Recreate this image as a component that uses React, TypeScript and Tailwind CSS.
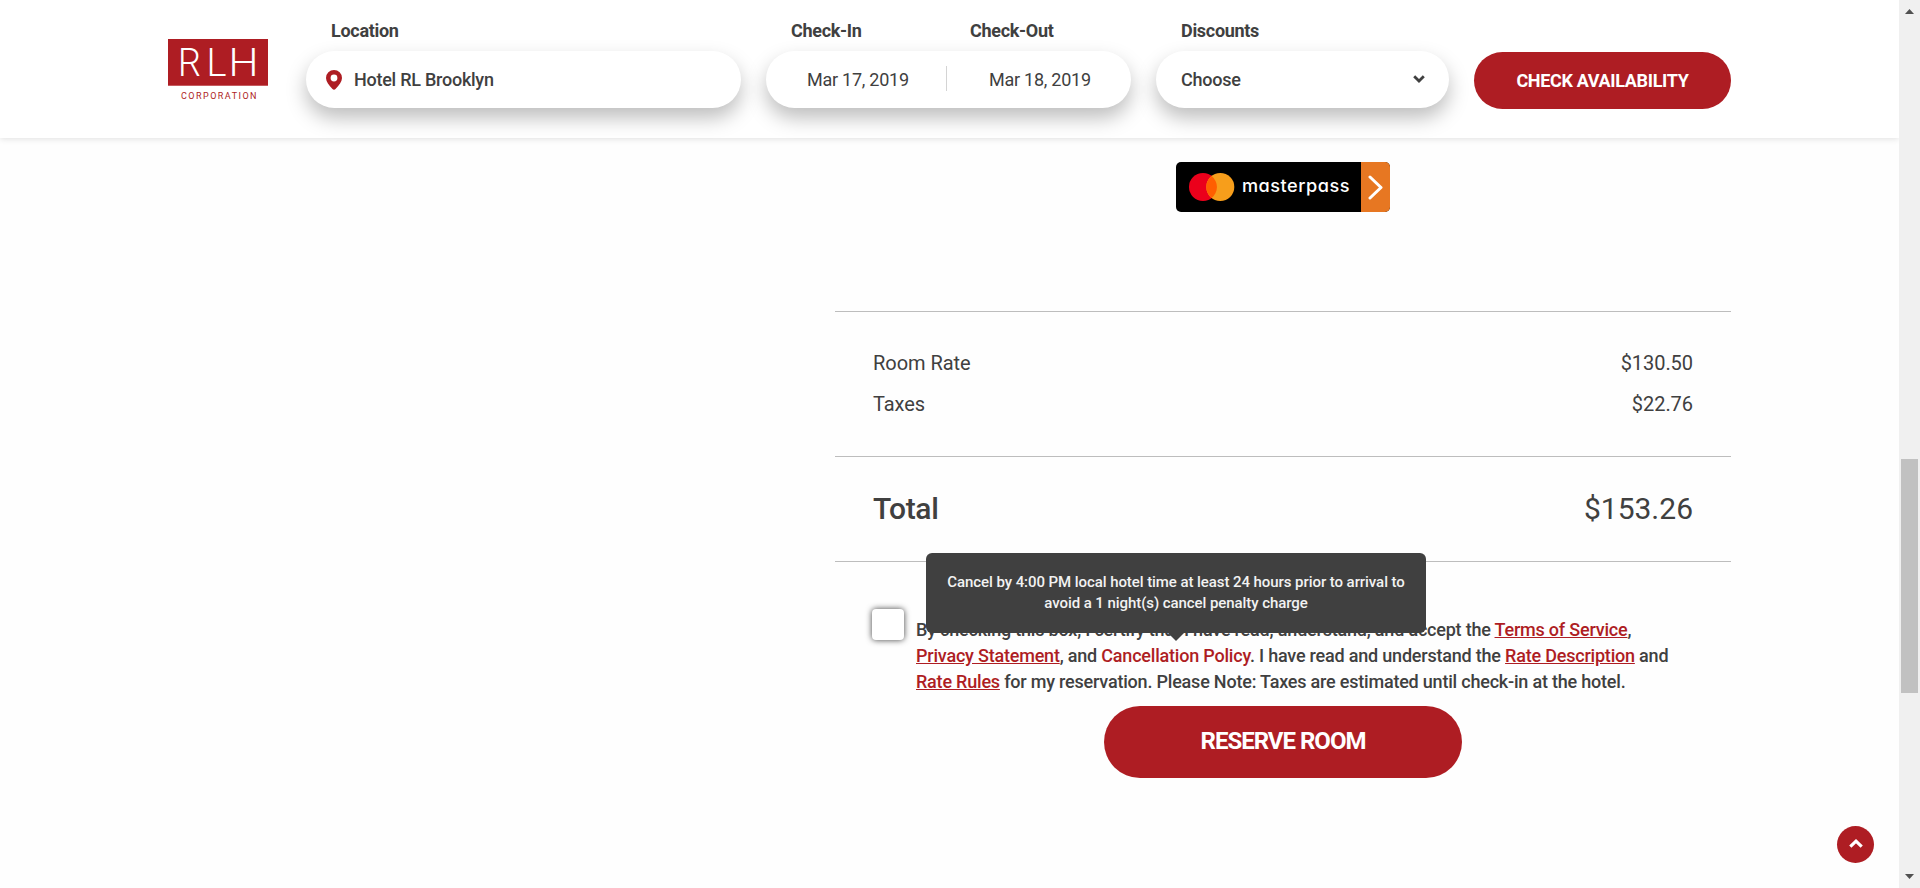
import React from "react";

const pill =
  "flex h-[57px] items-center rounded-full bg-white text-[18px] tracking-[-0.25px] shadow-[0_10px_20px_rgba(0,0,0,0.26)]";

function Logo() {
  return (
    <div className="mt-[39px] w-[100px] shrink-0">
      <svg width="100" height="62" viewBox="0 0 100 62" className="block">
        <rect width="100" height="46" fill="#ae1d23" />
        <rect y="46" width="100" height="1" fill="#c65a5e" />
        <g fill="#fff" fontFamily="Roboto, sans-serif" fontWeight="300" fontSize="38">
          <text x="10" y="37" textLength="23" lengthAdjust="spacingAndGlyphs">R</text>
          <text x="38.500" y="37" textLength="20" lengthAdjust="spacingAndGlyphs">L</text>
          <text x="60.500" y="37" textLength="30" lengthAdjust="spacingAndGlyphs">H</text>
        </g>
        <text
          x="13"
          y="60"
          fill="#ae1d23"
          fontFamily="Roboto, sans-serif"
          fontSize="9"
          fontWeight="400"
          textLength="75.500"
        >
          CORPORATION
        </text>
      </svg>
    </div>
  );
}

function Label({ children, className = "" }: { children: React.ReactNode; className?: string }) {
  return (
    <div className={`h-[28px] text-[18px] leading-[28px] font-bold tracking-[-0.3px] ${className}`}>{children}</div>
  );
}

function Header() {
  return (
    <header className="flex h-[138px] w-full shrink-0 bg-white pl-[168px] shadow-[0_1px_6px_rgba(0,0,0,0.12)]">
      <Logo />
      <div className="ml-[38px] w-[435px] pt-[17px]">
        <Label className="pl-[25px]">Location</Label>
        <div className={`${pill} mt-[6px] pl-[20px] font-medium`}>
          <svg width="16" height="20" viewBox="0 0 16 20" className="mr-[12px]">
            <path
              fillRule="evenodd"
              fill="#ae1d23"
              d="M8 0a8 8 0 0 1 8 8c0 3.600-3 7.300-6.500 11.100-.8.900-2.200.900-3 0C3 15.300 0 11.600 0 8a8 8 0 0 1 8-8Zm0 4.600a3.400 3.400 0 1 0 0 6.800 3.400 3.400 0 0 0 0-6.800Z"
            />
          </svg>
          <span>Hotel RL Brooklyn</span>
        </div>
      </div>
      <div className="ml-[25px] w-[365px] pt-[17px]">
        <div className="flex">
          <Label className="w-[178px] pl-[25px]">Check-In</Label>
          <Label className="pl-[26px]">Check-Out</Label>
        </div>
        <div className={`${pill} mt-[6px]`}>
          <span className="w-[180px] pl-[41px]">Mar 17, 2019</span>
          <span className="mb-[2px] h-[25px] w-px bg-[#d4d4d4]" />
          <span className="pl-[42px]">Mar 18, 2019</span>
        </div>
      </div>
      <div className="ml-[25px] w-[293px] pt-[17px]">
        <Label className="pl-[25px]">Discounts</Label>
        <div className={`${pill} mt-[6px] justify-between pr-[24px] pl-[25px] font-medium`}>
          <span>Choose</span>
          <svg width="12" height="8" viewBox="0 0 12 8" fill="none" stroke="#404040" strokeWidth="2.800" className="mb-px">
            <path d="M1.200 1.200 6 6 10.800 1.200" />
          </svg>
        </div>
      </div>
      <button className="mt-[52px] ml-[25px] h-[57px] w-[257px] rounded-full bg-[#ae1d23] text-[18px] font-bold tracking-[-0.33px] text-white">
        CHECK AVAILABILITY
      </button>
    </header>
  );
}

function Masterpass() {
  return (
    <div className="flex h-[50px] w-[214px] items-center overflow-hidden rounded-[5px] bg-black">
      <svg width="46" height="28" viewBox="0 0 46 28" className="ml-[13px] shrink-0">
        <circle cx="14" cy="14" r="14" fill="#eb001b" />
        <circle cx="31.300" cy="14" r="14" fill="#f79e1b" />
        <path d="M22.600 3a14 14 0 0 1 0 22 14 14 0 0 1 0-22Z" fill="#ff5f00" />
      </svg>
      <svg width="110" height="30" viewBox="0 0 110 30" className="ml-[7px] shrink-0">
        <text
          x="0"
          y="20"
          fill="#fff"
          fontFamily="Inter, sans-serif"
          fontSize="18"
          fontWeight="500"
          textLength="108"
          lengthAdjust="spacingAndGlyphs"
          className="tracking-[0.5px] [font-feature-settings:'cv11']"
        >
          masterpass
        </text>
      </svg>
      <div className="ml-auto flex h-full w-[29px] items-center justify-center bg-[#e77722]">
        <svg width="15" height="25" viewBox="0 0 15 25" fill="none" stroke="#fff" strokeWidth="3" strokeLinecap="round" strokeLinejoin="round">
          <path d="M2 2 13 12.500 2 23" />
        </svg>
      </div>
    </div>
  );
}

function Link({ children }: { children: React.ReactNode }) {
  return (
    <a href="#" className="text-[#ae1d23] underline">
      {children}
    </a>
  );
}

function Tooltip() {
  return (
    <div className="absolute top-[-9px] left-[91px] h-[80px] w-[500px] rounded-[6px] bg-[#404040] pt-[19px] text-center text-[15px] leading-[21px] font-medium tracking-[-0.07px] whitespace-nowrap text-[#f2f2f2]">
      Cancel by 4:00 PM local hotel time at least 24 hours prior to arrival to
      <br />
      avoid a 1 night(s) cancel penalty charge
      <svg width="16" height="8" viewBox="0 0 16 8" className="absolute top-[80px] left-[242px]">
        <path d="M0 0h16L8 8Z" fill="#404040" />
      </svg>
    </div>
  );
}

function Summary() {
  return (
    <section className="mt-[24px] ml-[835px] flex w-[896px] flex-col">
      <div className="flex justify-center">
        <Masterpass />
      </div>
      <div className="mt-[99px] border-y border-[#bdbdbd] px-[38px] py-[31px] text-[20px] leading-[41px] tracking-[-0.05px]">
        <div className="flex justify-between">
          <span>Room Rate</span>
          <span>$130.50</span>
        </div>
        <div className="flex justify-between">
          <span>Taxes</span>
          <span>$22.76</span>
        </div>
      </div>
      <div className="flex h-[105px] items-center justify-between border-b border-[#bdbdbd] px-[38px] pb-[2px] text-[30px]">
        <span className="font-medium tracking-[-0.3px]">Total</span>
        <span>$153.26</span>
      </div>
      <div className="relative flex pt-[55px] pl-[37px]">
        <span className="mt-[-8px] h-[31px] w-[32px] shrink-0 rounded-[4px] bg-white shadow-[0_0_6px_rgba(0,0,0,0.75)]" />
        <p className="ml-[12px] text-[18px] leading-[26px] font-medium tracking-[-0.206px] whitespace-nowrap">
          By checking this box, I certify that I have read, understand, and accept the <Link>Terms of Service</Link>,
          <br />
          <Link>Privacy Statement</Link>, and <span className="text-[#ae1d23]">Cancellation Policy</span>. I have read
          and understand the <Link>Rate Description</Link> and
          <br />
          <Link>Rate Rules</Link> for my reservation. Please Note: Taxes are estimated until check-in at the hotel.
        </p>
        <Tooltip />
      </div>
      <button className="mt-[11px] ml-[269px] h-[72px] w-[358px] rounded-full bg-[#ae1d23] pb-[2px] text-[24px] font-bold tracking-[-1px] text-white">
        RESERVE ROOM
      </button>
    </section>
  );
}

function Scrollbar() {
  return (
    <div className="flex w-[21px] shrink-0 flex-col items-center bg-[#f0f0f0]">
      <svg width="9" height="5" viewBox="0 0 9 5" className="mt-[9px]">
        <path d="M0 5h9L4.500 0Z" fill="#505050" />
      </svg>
      <div className="mt-[445px] h-[234px] w-[17px] bg-[#c1c1c1]" />
      <svg width="9" height="5" viewBox="0 0 9 5" className="mt-auto mb-[9px]">
        <path d="M0 0h9L4.500 5Z" fill="#505050" />
      </svg>
    </div>
  );
}

export default function App() {
  return (
    <div className="flex h-[888px] w-[1920px] overflow-hidden bg-[#fefefe] font-[Roboto,sans-serif] text-[#404040]">
      <main className="relative flex flex-1 flex-col overflow-hidden">
        <Header />
        <Summary />
        <button className="absolute right-[25px] bottom-[25px] flex h-[37px] w-[37px] items-center justify-center rounded-full bg-[#ae1d23]">
          <svg width="14" height="9" viewBox="0 0 14 9" fill="none" stroke="#fff" strokeWidth="3.200" className="mb-[2px]">
            <path d="M1.300 7.700 7 2.200 12.700 7.700" />
          </svg>
        </button>
      </main>
      <Scrollbar />
    </div>
  );
}
